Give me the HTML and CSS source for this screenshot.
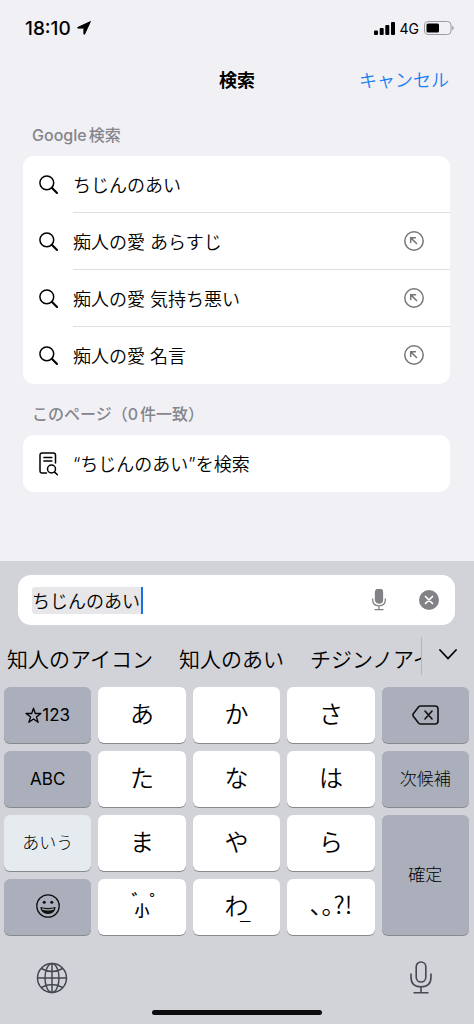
FILE: index.html
```html
<!DOCTYPE html>
<html lang="ja">
<head>
<meta charset="utf-8">
<meta name="viewport" content="width=device-width, initial-scale=1">
<title>検索</title>
<link rel="stylesheet" href="styles.css">
</head>
<body>
<svg class="defs" aria-hidden="true">
  <symbol id="search" viewBox="0 0 20 20"><circle cx="7.8" cy="7.8" r="6.9"/><path d="M12.8 12.8 L18 18" stroke-width="2.1"/></symbol>
  <symbol id="fill" viewBox="0 0 20 20"><circle cx="10" cy="10" r="9.2"/><path d="M6.7 12 V6.7 H12 M6.9 6.9 L13 13"/></symbol>
</svg>
<div class="screen">
  <div class="status">
    <span class="time">18:10</span>
    <svg class="location" viewBox="0 0 14 14"><path d="M13.4 .6 L.7 6.5 Q.3 7 .8 7.1 H6.5 Q6.9 7.2 6.9 7.6 V13.1 Q7.1 13.7 7.6 13.1 Z"/></svg>
    <span class="spacer"></span>
    <svg class="signal" viewBox="0 0 21 13"><rect x="0" y="8.5" width="4" height="4.5" rx="1"/><rect x="5.7" y="6" width="4" height="7" rx="1"/><rect x="11.3" y="3" width="4" height="10" rx="1"/><rect x="17" y="0" width="4" height="13" rx="1"/></svg>
    <span class="network">4G</span>
    <svg class="battery" viewBox="0 0 30 14"><rect x=".5" y=".5" width="26.5" height="13" rx="3.5" fill="none" stroke="#9b9b9f"/><rect x="2.5" y="2.5" width="12.5" height="9" rx="1.5"/><path d="M28.2 4.8 Q29.8 5.5 29.8 7 T28.2 9.2Z" fill="#9b9b9f"/></svg>
  </div>

  <header class="bar">
    <h1 class="title">検索</h1>
    <button class="cancel">キャンセル</button>
  </header>

  <main class="results">
    <h2 class="label">Google検索</h2>
    <ul class="card">
      <li class="row"><svg class="icon"><use href="#search"/></svg><div class="line"><button class="suggest">ちじんのあい</button></div></li>
      <li class="row"><svg class="icon"><use href="#search"/></svg><div class="line"><button class="suggest">痴人の愛 あらすじ</button><button class="use" aria-label="入力"><svg class="fill"><use href="#fill"/></svg></button></div></li>
      <li class="row"><svg class="icon"><use href="#search"/></svg><div class="line"><button class="suggest">痴人の愛 気持ち悪い</button><button class="use" aria-label="入力"><svg class="fill"><use href="#fill"/></svg></button></div></li>
      <li class="row"><svg class="icon"><use href="#search"/></svg><div class="line"><button class="suggest">痴人の愛 名言</button><button class="use" aria-label="入力"><svg class="fill"><use href="#fill"/></svg></button></div></li>
    </ul>
    <h2 class="label">このページ（0件一致）</h2>
    <ul class="card">
      <li class="row">
        <svg class="icon page" viewBox="0 0 20 24"><path d="M7.5 21 H3.2 Q1 21 1 18.8 V3.2 Q1 1 3.2 1 H14.3 Q16.5 1 16.5 3.2 V11 M4.9 5.6 H12.8 M4.9 9 H12.8"/><circle cx="12.5" cy="17" r="4"/><path d="M15.4 19.9 L18.4 22.8"/></svg>
        <div class="line"><button class="suggest">“ちじんのあい”を検索</button></div>
      </li>
    </ul>
  </main>

  <section class="keyboard">
    <div class="field">
      <input class="query" type="text" value="ちじんのあい" aria-label="検索">
      <span class="spacer"></span>
      <button class="plain" aria-label="音声入力"><svg class="mic-small" viewBox="0 0 14 22"><rect x="3.5" y="0" width="7" height="14" rx="3.3" fill="#828286"/><path d="M.7 9.5 V11 Q.7 16.8 7 16.8 T13.3 11 V9.5 M7 17 V20.5 M2.5 20.6 H11.5"/></svg></button>
      <button class="plain" aria-label="消去"><svg class="clear" viewBox="0 0 20 20"><circle cx="10" cy="10" r="10" fill="#828286" stroke="none"/><path d="M6.5 6.5 L13.5 13.5 M13.5 6.5 L6.5 13.5"/></svg></button>
    </div>

    <div class="candidates">
      <div class="words">
        <button class="word">知人のアイコン</button>
        <button class="word">知人のあい</button>
        <button class="word">チジンノアイ</button>
      </div>
      <button class="more" aria-label="候補を開く"><svg class="chevron" viewBox="0 0 18 11"><path d="M1 1 L9 9.5 L17 1"/></svg></button>
    </div>

    <div class="keys">
      <button class="key dark"><svg class="star" viewBox="0 0 17 17"><path d="M8.5 1.2 L10.3 6.5 H15.9 L11.4 9.9 L13.1 15.3 L8.5 12 L3.9 15.3 L5.6 9.9 L1.1 6.5 H6.7 Z"/></svg>123</button>
      <button class="key">あ</button>
      <button class="key">か</button>
      <button class="key">さ</button>
      <button class="key dark" aria-label="削除"><svg class="delete" viewBox="0 0 27 20"><path d="M8.5 1 H23 Q26 1 26 4 V16 Q26 19 23 19 H8.5 Q7.5 19 6.7 18.2 L1.3 11.2 Q.5 10 1.3 8.8 L6.7 1.8 Q7.5 1 8.5 1Z M13 6 L20 14 M20 6 L13 14"/></svg></button>

      <button class="key dark">ABC</button>
      <button class="key">た</button>
      <button class="key">な</button>
      <button class="key">は</button>
      <button class="key dark kanji">次候補</button>

      <button class="key active kanji">あいう</button>
      <button class="key">ま</button>
      <button class="key">や</button>
      <button class="key">ら</button>
      <button class="key dark kanji tall">確定</button>

      <button class="key dark" aria-label="絵文字"><svg class="emoji" viewBox="0 0 24 24"><circle cx="12" cy="12" r="11.2" fill="none" stroke="#111" stroke-width="1.3"/><circle cx="8.2" cy="8.3" r="1.5"/><circle cx="15.8" cy="8.3" r="1.5"/><path d="M4.3 13 Q12 15.2 19.7 13 Q19 20 12 20 T4.3 13Z"/><path d="M6 14.3 Q12 16 18 14.3 L17.6 15.7 Q12 17.2 6.4 15.7Z" fill="#adb0bc"/></svg></button>
      <button class="key marks"><span class="dots">゛゜</span><span class="small">小</span></button>
      <button class="key wa">わ<span class="under">_</span></button>
      <button class="key punct">、。?!</button>
    </div>

    <div class="footer">
      <button class="plain" aria-label="キーボード切替"><svg class="globe" viewBox="0 0 32 32"><circle cx="16" cy="16" r="14.5"/><ellipse cx="16" cy="16" rx="7" ry="14.5"/><path d="M16 1.5 V30.5 M1.5 16 H30.5 M5.3 6.5 Q16 12.5 26.7 6.5 M5.3 25.5 Q16 19.5 26.7 25.5"/></svg></button>
      <button class="plain" aria-label="音声入力"><svg class="mic" viewBox="0 0 22 33"><rect x="6.2" y="1" width="9.6" height="20" rx="4.8"/><path d="M1 12.5 V16 Q1 25.8 11 25.8 T21 16 V12.5 M11 26 V31.5 M3.5 31.7 H18.5"/></svg></button>
    </div>
    <div class="home"></div>
  </section>
</div>
</body>
</html>
```
FILE: styles.css
```css
* { box-sizing: border-box; }

body {
  margin: 0;
  background: #f1f0f5;
  color: #000;
  font-family: Inter, "Noto Sans CJK JP", sans-serif;
  font-weight: 350;
}

button, input {
  margin: 0;
  padding: 0;
  border: 0;
  background: none;
  color: inherit;
  font: inherit;
}

svg { display: block; }
.defs { display: none; }
.spacer { flex: 1; }

.screen {
  display: flex;
  flex-direction: column;
  min-height: 100vh;
}

.status {
  display: flex;
  align-items: center;
  height: 56px;
  padding: 0 20px 0 25px;
}
.time { font-size: 19px; font-weight: 500; margin-right: 6px; }
.location { width: 14px; height: 14px; stroke: #000; stroke-width: 1; stroke-linejoin: round; }
.signal { width: 21px; height: 13px; margin-right: 5px; }
.network { font-size: 14px; font-weight: 400; margin-right: 5px; }
.battery { width: 30px; height: 14px; }

.bar {
  display: grid;
  grid-template-columns: 1fr auto 1fr;
  align-items: center;
  height: 48px;
  padding: 0 25px 2px;
}
.title { grid-column: 2; margin: 0; font-size: 18px; font-weight: 700; }
.cancel { justify-self: end; font-size: 18px; color: #1a7ff0; }

.results { flex: 1; padding: 10px 24px 0 23px; }
.label {
  margin: 0;
  padding-left: 9px;
  height: 42px;
  line-height: 42px;
  font-size: 16px;
  font-weight: 500;
  color: #85858b;
  text-autospace: normal;
}
.card {
  margin: 0 0 9px;
  padding: 0;
  list-style: none;
  background: #fff;
  border-radius: 11px;
}
.row { display: flex; align-items: center; gap: 14px; padding-left: 16px; }
.icon { width: 20px; height: 20px; fill: none; stroke: #000; stroke-width: 1.5; stroke-linecap: round; }
.page { height: 24px; }
.line { flex: 1; display: flex; align-items: center; height: 57px; border-bottom: 1px solid #dfdfe2; }
.row:last-child .line { border-bottom-color: transparent; }
.suggest { flex: 1; text-align: left; font-size: 18px; }
.use { margin-right: 26px; }
.fill { width: 20px; height: 20px; fill: none; stroke: #77777b; stroke-width: 1.5; }

.keyboard { background: #d2d3d9; padding-top: 14px; }
.field {
  display: flex;
  align-items: center;
  height: 50px;
  margin: 0 19px 0 18px;
  padding: 0 16px 0 14px;
  background: #fff;
  border-radius: 13px;
}
.query {
  width: 111px;
  height: 27px;
  font-size: 18px;
  background: #e7e7ea;
  border-right: 2px solid #1a6fe8;
  border-radius: 3px 0 0 3px;
}
.plain { display: flex; }
.mic-small { width: 14px; height: 22px; margin-right: 33px; fill: none; stroke: #828286; stroke-width: 1.3; }
.clear { width: 20px; height: 20px; stroke: #fff; stroke-width: 1.7; stroke-linecap: round; }

.candidates { display: flex; align-items: center; height: 62px; }
.words {
  flex: 1;
  display: flex;
  gap: 26px;
  min-width: 0;
  padding: 3px 0 0 7px;
  overflow: hidden;
}
.word { flex: none; font-size: 21px; white-space: nowrap; }
.more {
  display: flex;
  align-items: center;
  width: 53px;
  height: 38px;
  padding: 0 0 4px 17px;
  border-left: 1px solid #b4b5bb;
}
.chevron { width: 18px; height: 11px; fill: none; stroke: #000; stroke-width: 1.8; stroke-linecap: round; }

.keys {
  display: grid;
  grid-template-columns: repeat(5, 1fr);
  grid-auto-rows: 56px;
  gap: 8px 7px;
  padding: 0 5px 0 4px;
}
.key {
  display: flex;
  align-items: center;
  justify-content: center;
  padding: 0 0 5px;
  background: #fff;
  border-radius: 6px;
  box-shadow: 0 1px 0 #88898e;
  font-size: 24px;
}
.dark, .active { padding: 0; font-size: 17px; font-weight: 400; }
.dark { background: #abafbb; }
.active { background: #e6ebf0; }
.kanji { padding-bottom: 3px; font-weight: 300; }
.star { width: 17px; height: 17px; fill: none; stroke: #000; stroke-width: 1.3; stroke-linejoin: round; }
.tall { grid-row: span 2; }
.delete { width: 27px; height: 20px; fill: none; stroke: #111; stroke-width: 1.6; stroke-linecap: round; stroke-linejoin: round; }
.emoji { width: 24px; height: 24px; margin-bottom: 2px; fill: #111; }
.marks { flex-direction: column; padding: 0; font-weight: 500; }
.dots { padding-left: 15px; font-size: 18px; line-height: 8px; }
.small { font-size: 15px; line-height: 10px; }
.wa { position: relative; }
.under { position: absolute; left: 54%; bottom: 10px; font-size: 24px; font-weight: 200; line-height: 24px; }
.punct { font-feature-settings: "halt"; font-family: "Noto Sans CJK JP", sans-serif; padding-bottom: 7px; }

.footer {
  display: flex;
  align-items: center;
  justify-content: space-between;
  height: 75px;
  padding: 10px 42px 0 36px;
}
.globe { width: 32px; height: 32px; fill: none; stroke: #444851; stroke-width: 1.5; }
.mic { width: 22px; height: 33px; fill: none; stroke: #444851; stroke-width: 1.6; }
.home { width: 36%; height: 5px; margin: 0 auto 9px; background: #0c0c0e; border-radius: 3px; }
```
